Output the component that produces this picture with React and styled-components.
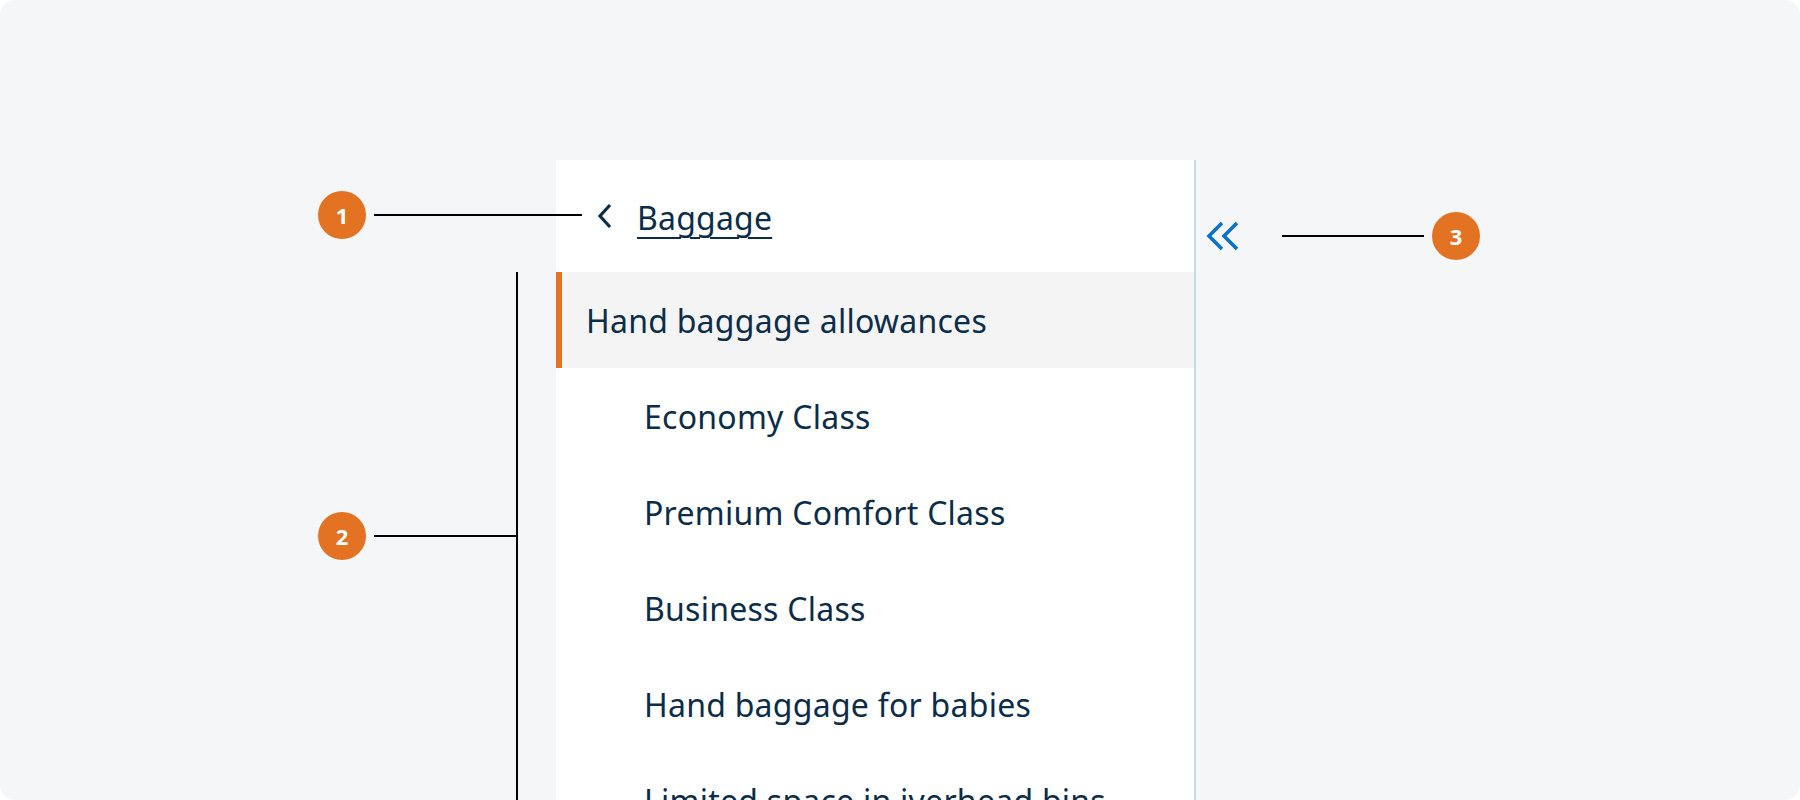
import React from "react";
import styled, { createGlobalStyle } from "styled-components";

const Global = createGlobalStyle`
  html, body { margin: 0; padding: 0; background: #ffffff; }
  body { font-family: "Noto Sans", "Liberation Sans", sans-serif; }
  * { box-sizing: border-box; }
`;

const Page = styled.div`
  width: 1800px;
  height: 800px;
  background: #f5f6f8;
  border-radius: 16px;
  overflow: hidden;
  padding: 160px 0 0 556px;
`;

const Figure = styled.div`
  position: relative;
  display: flex;
  align-items: flex-start;
  height: 100%;
`;

const Panel = styled.nav`
  width: 640px;
  height: 100%;
  background: #ffffff;
  border-right: 2px solid #c4dbee;
  display: flex;
  flex-direction: column;
`;

const Header = styled.div`
  flex: 0 0 112px;
  display: flex;
  align-items: center;
  padding-left: 41px;
  gap: 24px;
`;

const BackLink = styled.a`
  font-size: 32px;
  letter-spacing: 0.2px;
  color: #0b2d4a;
  text-decoration: underline;
  text-decoration-thickness: 2px;
  text-underline-offset: 7px;
  line-height: 1;
  margin-top: 4px;
`;

const Item = styled.div`
  flex: 0 0 96px;
  display: flex;
  align-items: center;
  font-size: 32px;
  letter-spacing: 0.25px;
  color: #0b2d4a;
  white-space: nowrap;
  padding-left: ${(p) => (p.$level === 2 ? "88px" : "24px")};
  background: ${(p) => (p.$active ? "#f4f4f4" : "#ffffff")};
  border-left: ${(p) => (p.$active ? "6px solid #e37222" : "none")};
`;

const Toggle = styled.button`
  margin-top: 60px;
  margin-left: 7px;
  width: 40px;
  height: 32px;
  padding: 0;
  border: none;
  background: transparent;
  display: flex;
  align-items: center;
  justify-content: center;
  color: #0b72c8;
`;

const Callout = styled.div`
  position: absolute;
  left: ${(p) => p.$x}px;
  top: ${(p) => p.$y}px;
  display: flex;
  align-items: center;
  gap: 8px;
`;

const Badge = styled.div`
  width: 48px;
  height: 48px;
  border-radius: 50%;
  background: #e37222;
  color: #ffffff;
  font-family: "Noto Sans", sans-serif;
  font-weight: 700;
  font-size: 22px;
  display: flex;
  align-items: center;
  justify-content: center;
`;

const Line = styled.div`
  width: ${(p) => p.$w}px;
  height: 2px;
  background: #000000;
`;

const Bracket = styled.div`
  position: absolute;
  left: -40px;
  top: 112px;
  bottom: 0;
  width: 2px;
  background: #000000;
`;

const BackChevron = () => (
  <svg width="16" height="26" viewBox="0 0 16 26" fill="none">
    <path d="M13 2 L3 13 L13 24" stroke="#0b2d4a" strokeWidth="3.2" />
  </svg>
);

const DoubleChevron = () => (
  <svg width="34" height="30" viewBox="0 0 34 30" fill="none">
    <path d="M16 2 L3 15 L16 28" stroke="currentColor" strokeWidth="3.6" />
    <path d="M31 2 L18 15 L31 28" stroke="currentColor" strokeWidth="3.6" />
  </svg>
);

const items = [
  "Economy Class",
  "Premium Comfort Class",
  "Business Class",
  "Hand baggage for babies",
  "Limited space in iverhead bins",
];

export default function App() {
  return (
    <>
      <Global />
      <Page>
        <Figure>
          <Panel>
            <Header>
              <BackChevron />
              <BackLink>Baggage</BackLink>
            </Header>
            <Item $active>Hand baggage allowances</Item>
            {items.map((t) => (
              <Item key={t} $level={2}>
                {t}
              </Item>
            ))}
          </Panel>
          <Toggle aria-label="Collapse">
            <DoubleChevron />
          </Toggle>

          <Callout $x={-238} $y={31}>
            <Badge>1</Badge>
            <Line $w={208} />
          </Callout>
          <Callout $x={-238} $y={352}>
            <Badge>2</Badge>
            <Line $w={144} />
          </Callout>
          <Bracket />
          <Callout $x={726} $y={52}>
            <Line $w={142} />
            <Badge>3</Badge>
          </Callout>
        </Figure>
      </Page>
    </>
  );
}
